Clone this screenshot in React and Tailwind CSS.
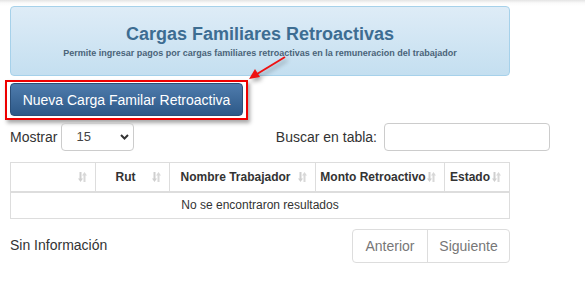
import React from "react";

const SortIcon = () => (
  <svg width="9" height="11" viewBox="0 0 9 11" className="absolute right-[8px] top-1/2 -translate-y-1/2">
    <path d="M2.5 0.5 V8" stroke="#cfcfcf" strokeWidth="2" />
    <path d="M0 7 L2.5 10.5 L5 7 Z" fill="#cfcfcf" />
    <path d="M6.5 3 V10.5" stroke="#d8d8d8" strokeWidth="2" />
    <path d="M4 4 L6.5 0.5 L9 4 Z" fill="#d8d8d8" />
  </svg>
);

const columns = [
  { label: "", width: "w-[85px]" },
  { label: "Rut", width: "w-[74px]" },
  { label: "Nombre Trabajador", width: "w-[146px]" },
  { label: "Monto Retroactivo", width: "w-[129px]" },
  { label: "Estado", width: "w-[65px]" },
];

const App = () => {
  return (
    <div className="relative w-[585px] h-[293px] bg-white overflow-hidden font-['Liberation_Sans',Arial,sans-serif] text-[#333]">
      {/* top shadow */}
      <div className="h-[6px] bg-gradient-to-b from-[#e4e4e4] via-[#fafafa] to-white"></div>

      {/* header */}
      <div className="ml-[10px] w-[500px] h-[70px] rounded border border-[#a6d1ea] bg-gradient-to-b from-[#deecf7] to-[#c4dff0] flex flex-col items-center pt-[16px]">
        <div className="text-[18px] leading-[22px] font-bold text-[#3d6d92]">
          Cargas Familiares Retroactivas
        </div>
        <div className="text-[9px] leading-[12px] mt-[2px] font-bold text-[#4a6479]">
          Permite ingresar pagos por cargas familiares retroactivas en la remuneracion del trabajador
        </div>
      </div>

      {/* button with annotation box */}
      <div className="mt-[4px] ml-[5px] w-[243px] border-2 border-[#ee0000] pl-[3px] pr-[3px] pt-[1px] pb-[2px] shadow-[2px_3px_4px_rgba(0,0,0,0.35)]">
        <button className="w-[233px] h-[33px] rounded border border-[#2b4f78] bg-gradient-to-b from-[#4f7cad] to-[#2d5988] text-white text-[14px] leading-none">
          Nueva Carga Familar Retroactiva
        </button>
      </div>

      {/* controls */}
      <div className="mt-[3px] ml-[10px] w-[540px] flex items-center justify-between text-[14px]">
        <div className="flex items-center">
          <span>Mostrar</span>
          <div className="ml-[4px] w-[73px] h-[28px] rounded border border-[#cccccc] flex items-center justify-between pl-[14px] pr-[4px] text-[13px] text-[#444]">
            <span>15</span>
            <svg width="9" height="6" viewBox="0 0 9 6">
              <path d="M1 1 L4.5 4.5 L8 1" stroke="#333" strokeWidth="2" fill="none" />
            </svg>
          </div>
        </div>
        <div className="flex items-center">
          <span>Buscar en tabla:</span>
          <div className="ml-[7px] w-[166px] h-[28px] rounded border border-[#cccccc]"></div>
        </div>
      </div>

      {/* table */}
      <table className="mt-[11px] ml-[10px] w-[500px] table-fixed border-collapse text-[12px]">
        <colgroup>
          {columns.map((c, i) => (
            <col key={i} className={c.width} />
          ))}
        </colgroup>
        <thead>
          <tr className="h-[29px]">
            {columns.map((c, i) => (
              <th
                key={i}
                className="relative whitespace-nowrap border border-[#dddddd] border-b-2 font-bold text-[#333] pr-[14px] text-center"
              >
                {c.label}
                <SortIcon />
              </th>
            ))}
          </tr>
        </thead>
        <tbody>
          <tr className="h-[27px]">
            <td colSpan={5} className="border border-[#dddddd] text-center text-[#333]">
              No se encontraron resultados
            </td>
          </tr>
        </tbody>
      </table>

      {/* footer */}
      <div className="mt-[10px] ml-[10px] w-[500px] flex items-center justify-between text-[14px]">
        <span className="-mt-[2px]">Sin Información</span>
        <div className="flex h-[34px] rounded border border-[#dddddd] text-[#777]">
          <div className="w-[75px] flex items-center justify-center border-r border-[#dddddd]">Anterior</div>
          <div className="w-[81px] flex items-center justify-center">Siguiente</div>
        </div>
      </div>

      {/* annotation arrow */}
      <svg
        className="absolute left-[244px] top-[52px]"
        width="50"
        height="34"
        viewBox="0 0 50 34"
        style={{ filter: "drop-shadow(2px 3px 2px rgba(0,0,0,0.35))" }}
      >
        <path d="M41 5 L13 22" stroke="#ee1111" strokeWidth="2" />
        <path d="M5 27 L11 17 L16 25 Z" fill="#ee1111" />
      </svg>
    </div>
  );
};

export default App;
